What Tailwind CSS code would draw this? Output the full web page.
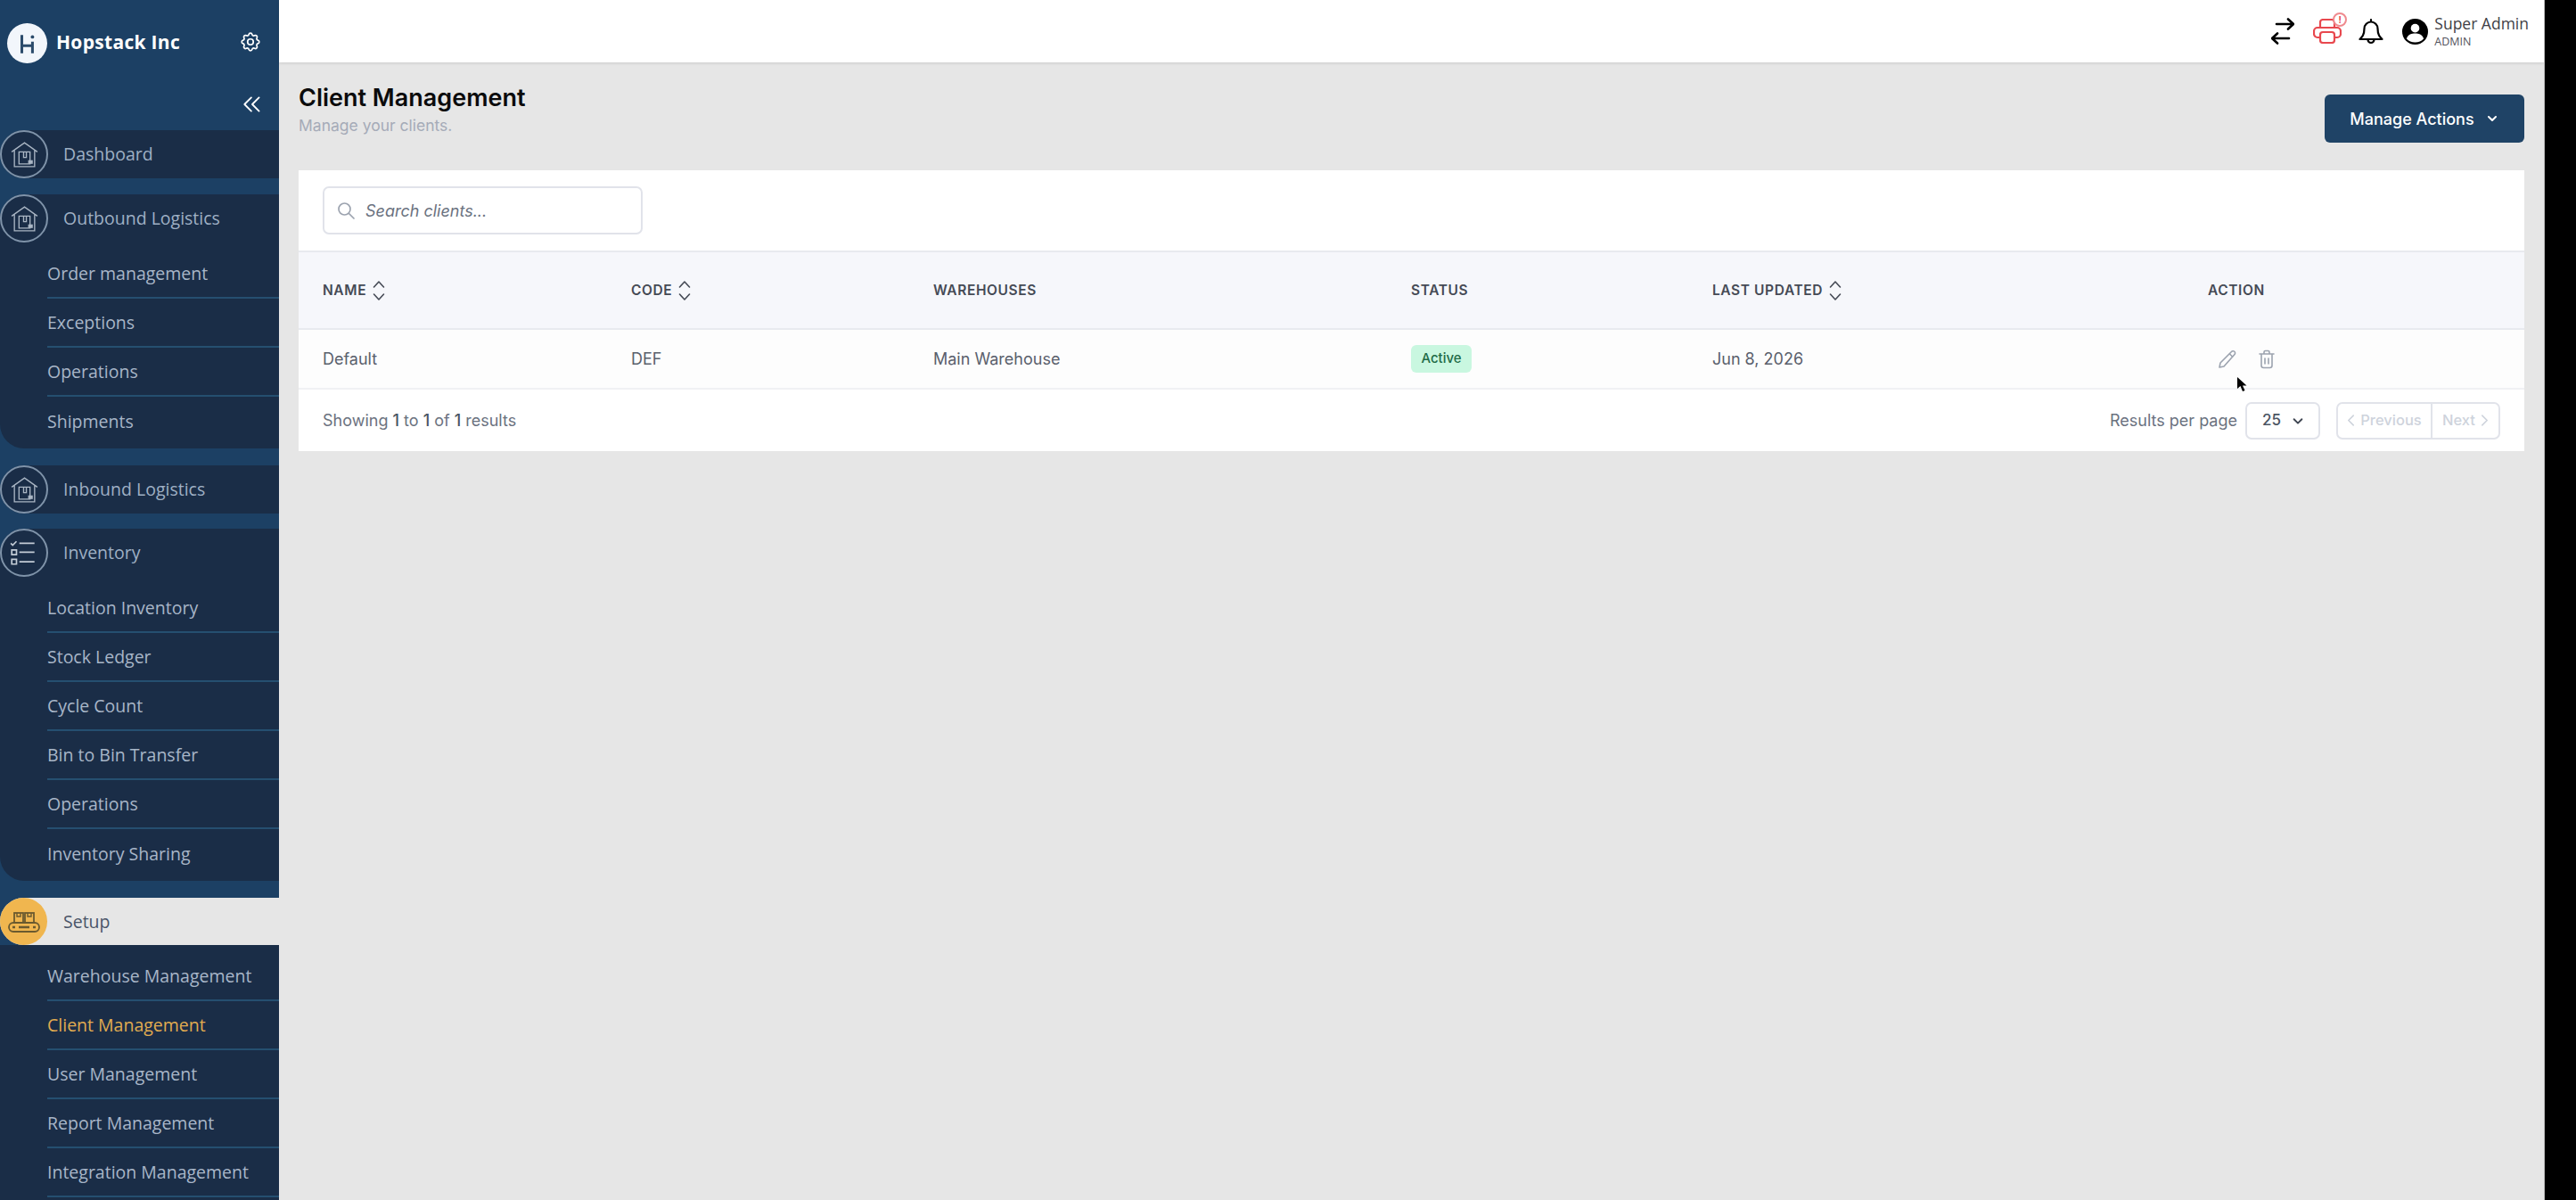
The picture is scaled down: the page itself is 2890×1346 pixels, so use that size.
<!DOCTYPE html>
<html lang="en">
<head>
  <meta charset="UTF-8" />
  <title>Client Management</title>
  <script src="https://cdn.jsdelivr.net/npm/@tailwindcss/browser@4"></script>
</head>
<body class="bg-black">
  <div class="w-[2855px] h-[1346px] flex overflow-hidden bg-[#e6e6e6] border-r border-[#b9b9b9] font-['Inter',sans-serif]">

    <!-- sidebar -->
    <aside class="w-[313px] shrink-0 h-full overflow-hidden bg-[#1c4064] font-['Open_Sans',sans-serif]">
      <div class="h-[146px] relative">
        <div class="absolute left-[8px] top-[26px] w-[45px] h-[45px] rounded-full bg-[#f2f6fb] flex items-center justify-center">
          <svg viewBox="0 0 24 24" class="w-[26px] h-[26px]" fill="none" stroke="#2b4b6b" stroke-width="2.8">
            <path d="M6 3v19M17 10v12M6 14h11" />
            <circle cx="17" cy="5" r="1.800" fill="#2b4b6b" stroke="none" />
          </svg>
        </div>
        <span class="absolute left-[63px] top-[31px] text-[21px] leading-[32px] font-bold text-white tracking-[0.3px]">Hopstack Inc</span>
        <svg viewBox="0 0 24 24" class="absolute left-[268px] top-[34px] w-[26px] h-[26px]" fill="none" stroke="#fff" stroke-width="1.6" stroke-linecap="round" stroke-linejoin="round">
          <path d="M10.3 4.3c.4-1.8 3-1.8 3.4 0a1.7 1.7 0 0 0 2.6 1.1c1.5-.9 3.3.8 2.4 2.4a1.7 1.7 0 0 0 1 2.5c1.8.4 1.8 3 0 3.4a1.7 1.7 0 0 0-1 2.6c.9 1.5-.9 3.3-2.4 2.4a1.7 1.7 0 0 0-2.6 1c-.4 1.8-3 1.8-3.4 0a1.7 1.7 0 0 0-2.6-1c-1.5.9-3.3-.9-2.4-2.4a1.7 1.7 0 0 0-1-2.6c-1.8-.4-1.8-3 0-3.4a1.7 1.7 0 0 0 1-2.5c-.9-1.6.9-3.3 2.4-2.4a1.7 1.7 0 0 0 2.6-1.1z" />
          <circle cx="12" cy="12" r="3" />
        </svg>
        <svg viewBox="0 0 24 24" class="absolute left-[270px] top-[104px] w-[26px] h-[26px]" fill="none" stroke="#fff" stroke-width="1.7" stroke-linecap="round" stroke-linejoin="round">
          <path d="M11 5l-7 7 7 7M19 5l-7 7 7 7" />
        </svg>
      </div>

      <!-- Dashboard -->
      <div class="h-[54px] bg-[#1a2d47] rounded-l-[27px] flex items-center relative">
        <span class="w-[54px] h-[54px] shrink-0 rounded-full border-2 border-[#7f93a9] flex items-center justify-center">
          <svg viewBox="0 0 32 32" class="w-[33px] h-[33px]" fill="none" stroke="#aab6c4" stroke-width="1.3">
            <path d="M2 13L16 3l14 10M5 11v18h22V11" />
            <path d="M10 13h12v13H10zM15 13v6h3v-6" />
            <rect x="20" y="22" width="5" height="4" fill="#aab6c4" stroke="none" />
          </svg>
        </span>
        <span class="ml-[17px] text-[19.500px] text-[#9fb0c4]">Dashboard</span>
      </div>

      <!-- Outbound -->
      <div class="mt-[18px] bg-[#1a2d47] rounded-l-[27px] h-[285px]">
        <div class="h-[54px] flex items-center">
          <span class="w-[54px] h-[54px] shrink-0 rounded-full border-2 border-[#7f93a9] flex items-center justify-center">
            <svg viewBox="0 0 32 32" class="w-[33px] h-[33px]" fill="none" stroke="#aab6c4" stroke-width="1.3">
              <path d="M2 13L16 3l14 10M5 11v18h22V11" />
              <path d="M10 13h12v13H10zM15 13v6h3v-6" />
              <rect x="20" y="22" width="5" height="4" fill="#aab6c4" stroke="none" />
            </svg>
          </span>
          <span class="ml-[17px] text-[19.500px] text-[#9fb0c4]">Outbound Logistics</span>
        </div>
        <ul class="pt-[8px] pl-[53px] text-[19.500px] text-[#a8b6c8]">
          <li class="h-[55px] flex items-center border-b-2 border-[#254f70]">Order management</li>
          <li class="h-[55px] flex items-center border-b-2 border-[#254f70]">Exceptions</li>
          <li class="h-[55px] flex items-center border-b-2 border-[#254f70]">Operations</li>
          <li class="h-[55px] flex items-center">Shipments</li>
        </ul>
      </div>

      <!-- Inbound -->
      <div class="mt-[19px] h-[54px] bg-[#1a2d47] rounded-l-[27px] flex items-center">
        <span class="w-[54px] h-[54px] shrink-0 rounded-full border-2 border-[#7f93a9] flex items-center justify-center">
          <svg viewBox="0 0 32 32" class="w-[33px] h-[33px]" fill="none" stroke="#aab6c4" stroke-width="1.3">
            <path d="M2 13L16 3l14 10M5 11v18h22V11" />
            <path d="M10 13h12v13H10zM15 13v6h3v-6" />
            <rect x="20" y="22" width="5" height="4" fill="#aab6c4" stroke="none" />
          </svg>
        </span>
        <span class="ml-[17px] text-[19.500px] text-[#9fb0c4]">Inbound Logistics</span>
      </div>

      <!-- Inventory -->
      <div class="mt-[17px] bg-[#1a2d47] rounded-l-[27px] h-[395px]">
        <div class="h-[54px] flex items-center">
          <span class="w-[54px] h-[54px] shrink-0 rounded-full border-2 border-[#7f93a9] flex items-center justify-center">
            <svg viewBox="0 0 32 32" class="w-[34px] h-[34px]" fill="none" stroke="#c3ccd6" stroke-width="1.6">
              <path d="M2 6l2 2 4-4M11 6h16M3 13h5v5H3zM11 15.500h16M3 23h5v5H3zM11 25.500h16" />
            </svg>
          </span>
          <span class="ml-[17px] text-[19.500px] text-[#9fb0c4]">Inventory</span>
        </div>
        <ul class="pt-[8px] pl-[53px] text-[19.500px] text-[#a8b6c8]">
          <li class="h-[55px] flex items-center border-b-2 border-[#254f70]">Location Inventory</li>
          <li class="h-[55px] flex items-center border-b-2 border-[#254f70]">Stock Ledger</li>
          <li class="h-[55px] flex items-center border-b-2 border-[#254f70]">Cycle Count</li>
          <li class="h-[55px] flex items-center border-b-2 border-[#254f70]">Bin to Bin Transfer</li>
          <li class="h-[55px] flex items-center border-b-2 border-[#254f70]">Operations</li>
          <li class="h-[55px] flex items-center">Inventory Sharing</li>
        </ul>
      </div>

      <!-- Setup -->
      <div class="mt-[19px] h-[53px] bg-[#e6e6e6] rounded-l-[27px] flex items-center">
        <span class="w-[53px] h-[53px] shrink-0 rounded-full bg-[#f0b64f] flex items-center justify-center">
          <svg viewBox="0 0 36 24" class="w-[36px] h-[24px]" fill="none" stroke="#6b5a2f" stroke-width="1.800">
            <rect x="1" y="13" width="34" height="10" rx="5" />
            <path d="M5 18h3M12 18h12M28 18h3" stroke-width="2.400" />
            <rect x="7" y="2" width="10" height="11" />
            <rect x="19" y="2" width="10" height="11" />
            <path d="M10 2v4h4V2M22 2v4h4V2" stroke-width="1.400" />
          </svg>
        </span>
        <span class="ml-[18px] text-[19.500px] text-[#4a5568]">Setup</span>
      </div>
      <ul class="bg-[#1a2d47] pt-[8px] pl-[53px] h-[400px] text-[19.500px] text-[#a8b6c8]">
        <li class="h-[55px] flex items-center border-b-2 border-[#254f70]">Warehouse Management</li>
        <li class="h-[55px] flex items-center border-b-2 border-[#254f70] text-[#e0ab50]">Client Management</li>
        <li class="h-[55px] flex items-center border-b-2 border-[#254f70]">User Management</li>
        <li class="h-[55px] flex items-center border-b-2 border-[#254f70]">Report Management</li>
        <li class="h-[55px] flex items-center border-b-2 border-[#254f70]">Integration Management</li>
      </ul>
    </aside>

    <!-- main column -->
    <div class="flex-1 min-w-0 flex flex-col">
      <header class="h-[70px] shrink-0 bg-white shadow-[0_1px_3px_rgba(0,0,0,0.12)] flex items-center justify-end pr-[17px]">
        <svg viewBox="0 0 26 30" class="w-[26px] h-[30px]" fill="none" stroke="#000" stroke-width="2.600" stroke-linecap="round" stroke-linejoin="round">
          <path d="M6 7h19M19 1.500L25 7l-6 5.500" />
          <path d="M20 23H1M7 17.500L1 23l6 5.500" />
        </svg>
        <span class="relative ml-[21px] w-[32px] h-[28px]">
          <svg viewBox="0 0 32 28" class="w-[32px] h-[28px]" fill="none" stroke="#e8484e" stroke-width="2.200" stroke-linejoin="round">
            <path d="M8 10V4a3 3 0 0 1 3-3h10a3 3 0 0 1 3 3v6" />
            <path d="M7 21H5a4 4 0 0 1-4-4v-3a4 4 0 0 1 4-4h22a4 4 0 0 1 4 4v3a4 4 0 0 1-4 4h-2" />
            <rect x="8" y="15" width="16" height="12" rx="3" />
          </svg>
          <span class="absolute -top-[7px] -right-[6px] w-[16px] h-[16px] rounded-full bg-white border-2 border-[#ef8a8e] text-[#e8484e] text-[10px] leading-[12px] text-center font-bold">!</span>
        </span>
        <svg viewBox="0 0 28 30" class="ml-[19px] w-[28px] h-[30px]" fill="none" stroke="#000" stroke-width="2.200" stroke-linecap="round" stroke-linejoin="round">
          <path d="M21.500 12a7.500 7.500 0 0 0-15 0c0 7-2.500 9.500-5 12h25c-2.500-2.500-5-5-5-12zM10.500 24.500a3.500 3.500 0 0 0 7 0M14 4.500V2" />
        </svg>
        <svg viewBox="0 0 30 30" class="ml-[21px] w-[29px] h-[29px]">
          <circle cx="15" cy="15" r="15" fill="#000" />
          <circle cx="15" cy="11" r="5" fill="#fff" />
          <path d="M5 23c2-5 6-6 10-6s8 1 10 6c-2.500 3-6 4.500-10 4.500S7.500 26 5 23z" fill="#fff" />
        </svg>
        <div class="ml-[7px] font-['Open_Sans',sans-serif]">
          <div class="text-[17.500px] leading-[20px] text-[#3f3f46]">Super Admin</div>
          <div class="text-[12.500px] leading-[14px] mt-[4px] text-[#52525b]">ADMIN</div>
        </div>
      </header>

      <main class="flex-1 min-h-0 pl-[22px] pr-[22px]">
        <div class="h-[121px] flex justify-between">
          <div>
            <h1 class="pt-[23px] text-[27px] leading-[33px] font-semibold text-[#0b0b0c]">Client Management</h1>
            <p class="mt-[3px] text-[17.500px] leading-[24px] text-[#a5abb8]">Manage your clients.</p>
          </div>
          <button class="mt-[36px] w-[224px] h-[54px] rounded-[6px] bg-[#1f4366] text-white text-[18px] font-medium flex items-center justify-center gap-[12px]">
            Manage Actions
            <svg viewBox="0 0 16 16" class="w-[16px] h-[16px]" fill="none" stroke="#fff" stroke-width="2" stroke-linecap="round" stroke-linejoin="round"><path d="M4 6l4 4 4-4" /></svg>
          </button>
        </div>

        <section class="bg-white">
          <div class="h-[90px] px-[27px] pt-[18px]">
            <div class="w-[359px] h-[54px] rounded-[7px] border-2 border-[#e1e3ea] flex items-center pl-[14px]">
              <svg viewBox="0 0 20 20" class="w-[20px] h-[20px]" fill="none" stroke="#9ca3af" stroke-width="1.7" stroke-linecap="round"><circle cx="8.500" cy="8.500" r="6.500" /><path d="M13.500 13.500L19 19" /></svg>
              <span class="ml-[12px] text-[18px] leading-[28px] pt-[2px] italic text-[#6b7280]">Search clients...</span>
            </div>
          </div>

          <table class="w-full table-fixed border-collapse">
            <thead>
              <tr class="h-[87px] bg-[#f6f7fb] border-y-2 border-[#e8eaef] text-left text-[15.500px] uppercase tracking-[0.6px] text-[#454a55]">
                <th class="w-[373px] pl-[27px] font-semibold">
                  <span class="flex items-center gap-[7px]">Name
                    <svg viewBox="0 0 14 24" class="w-[14px] h-[24px]" fill="none" stroke="#454a55" stroke-width="1.6" stroke-linecap="round" stroke-linejoin="round"><path d="M1.500 8L7 2l5.500 6M1.500 16L7 22l5.500-6" /></svg>
                  </span>
                </th>
                <th class="w-[339px] font-semibold">
                  <span class="flex items-center gap-[7px]">Code
                    <svg viewBox="0 0 14 24" class="w-[14px] h-[24px]" fill="none" stroke="#454a55" stroke-width="1.6" stroke-linecap="round" stroke-linejoin="round"><path d="M1.500 8L7 2l5.500 6M1.500 16L7 22l5.500-6" /></svg>
                  </span>
                </th>
                <th class="w-[536px] font-semibold">Warehouses</th>
                <th class="w-[338px] font-semibold">Status</th>
                <th class="w-[556px] font-semibold">
                  <span class="flex items-center gap-[7px]">Last Updated
                    <svg viewBox="0 0 14 24" class="w-[14px] h-[24px]" fill="none" stroke="#454a55" stroke-width="1.6" stroke-linecap="round" stroke-linejoin="round"><path d="M1.500 8L7 2l5.500 6M1.500 16L7 22l5.500-6" /></svg>
                  </span>
                </th>
                <th class="font-semibold">Action</th>
              </tr>
            </thead>
            <tbody>
              <tr class="h-[67px] bg-[#fdfdfd] border-b-2 border-[#f0f1f4] text-[18px] text-[#5a606c]">
                <td class="pl-[27px]">Default</td>
                <td>DEF</td>
                <td>Main Warehouse</td>
                <td><span class="inline-flex items-center h-[31px] w-[68px] justify-center rounded-[6px] bg-[#c9f7e0] text-[15px] font-medium text-[#1f6b47]">Active</span></td>
                <td>Jun 8, 2026</td>
                <td>
                  <span class="flex items-center gap-[23px] pl-[11px]">
                    <svg viewBox="0 0 22 22" class="w-[22px] h-[22px]" fill="none" stroke="#9ca3af" stroke-width="1.6" stroke-linecap="round" stroke-linejoin="round"><path d="M15.500 2.500a2 2 0 0 1 3.500 3L7 19l-5 1 1-5z" /><path d="M13.500 5l3 3" /></svg>
                    <svg viewBox="0 0 20 22" class="w-[20px] h-[22px]" fill="none" stroke="#9ca3af" stroke-width="1.6" stroke-linecap="round" stroke-linejoin="round"><path d="M2 5h16M7 5V3a1.500 1.500 0 0 1 1.500-1.500h3A1.500 1.500 0 0 1 13 3v2M4 5v13a2.500 2.500 0 0 0 2.500 2.500h7A2.500 2.500 0 0 0 16 18V5M8 10v6M12 10v6" /></svg>
                  </span>
                </td>
              </tr>
            </tbody>
          </table>

          <div class="h-[69px] px-[27px] flex items-center justify-between text-[18px] text-[#6b7280]">
            <p>Showing <span class="font-medium text-[#4b5563]">1</span> to <span class="font-medium text-[#4b5563]">1</span> of <span class="font-medium text-[#4b5563]">1</span> results</p>
            <div class="flex items-center">
              <span class="text-[#6b7280]">Results per page</span>
              <span class="ml-[9px] w-[84px] h-[42px] rounded-[7px] border-2 border-[#e1e3ea] flex items-center justify-between pl-[17px] pr-[16px] text-[17px] text-[#4b5563] font-medium">25
                <svg viewBox="0 0 16 16" class="w-[14px] h-[14px]" fill="none" stroke="#3f4652" stroke-width="2.200" stroke-linecap="round" stroke-linejoin="round"><path d="M3 6l5 5 5-5" /></svg>
              </span>
              <div class="ml-[18px] w-[184px] h-[42px] rounded-[7px] border-2 border-[#e1e3ea] flex items-center text-[16.500px] font-medium text-[#ced3dc]">
                <span class="w-[106px] h-full flex items-center justify-center gap-[6px] border-r-2 border-[#e1e3ea]">
                  <svg viewBox="0 0 10 16" class="w-[9px] h-[15px]" fill="none" stroke="#ced3dc" stroke-width="1.800" stroke-linecap="round" stroke-linejoin="round"><path d="M8 2L2 8l6 6" /></svg>Previous
                </span>
                <span class="flex-1 h-full flex items-center justify-center gap-[6px]">Next
                  <svg viewBox="0 0 10 16" class="w-[9px] h-[15px]" fill="none" stroke="#ced3dc" stroke-width="1.800" stroke-linecap="round" stroke-linejoin="round"><path d="M2 2l6 6-6 6" /></svg>
                </span>
              </div>
            </div>
          </div>
        </section>
      </main>
    </div>
  </div>

  <!-- mouse cursor caught in the capture -->
  <svg viewBox="0 0 12 18" class="absolute left-[2509px] top-[422px] w-[12px] h-[18px]">
    <path d="M1 1v13l3.500-3 2.500 6 2.500-1-2.500-5.500h4.500z" fill="#000" />
  </svg>
</body>
</html>
